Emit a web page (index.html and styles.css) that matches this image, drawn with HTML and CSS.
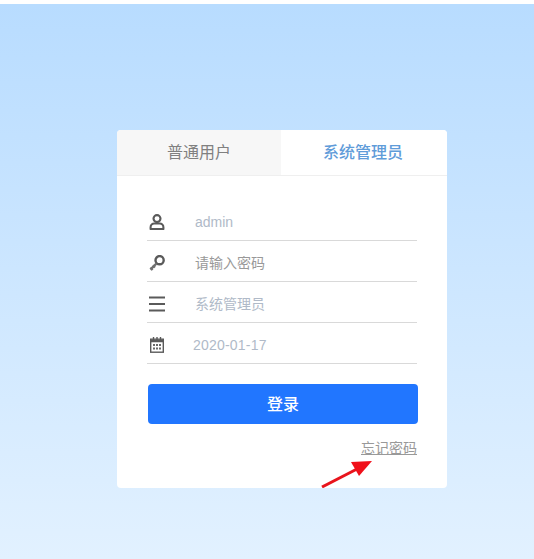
FILE: index.html
```html
<!DOCTYPE html>
<html lang="zh">
<head>
<meta charset="utf-8">
<title>登录</title>
<link rel="stylesheet" href="styles.css">
</head>
<body>
<main class="page">
  <section class="card">
    <div class="tabs">
      <div class="tab">普通用户</div>
      <div class="tab active">系统管理员</div>
    </div>
    <form class="form">
      <div class="row">
        <svg class="icon" viewBox="0 0 16 16"><circle cx="8" cy="4.6" r="3.5" fill="none" stroke="#5a5a5a" stroke-width="2.1"/><path d="M1.6 15v-1.8c0-2.2 1.8-3.7 3.6-3.7h5.6c1.8 0 3.6 1.5 3.6 3.7V15z" fill="none" stroke="#5a5a5a" stroke-width="2.1" stroke-linejoin="round"/></svg>
        <span class="value">admin</span>
      </div>
      <div class="row">
        <svg class="icon" viewBox="0 0 16 16"><circle cx="10.6" cy="5.2" r="4.1" fill="none" stroke="#5a5a5a" stroke-width="2.4"/><path d="M7.6 8.4 1.4 14.6M1.4 12.6l2.2 2.4M3.8 10.2l2.2 2.4" fill="none" stroke="#707070" stroke-width="2.2"/></svg>
        <span class="value dark cjk">请输入密码</span>
      </div>
      <div class="row">
        <svg class="icon" viewBox="0 0 16 16"><path d="M0 1.6h16M0 8h16M0 14.4h16" stroke="#5a5a5a" stroke-width="2"/></svg>
        <span class="value cjk">系统管理员</span>
      </div>
      <div class="row">
        <svg class="icon" viewBox="0 0 16 16"><path d="M4.5 0v3M8 0v3M11.5 0v3" stroke="#5a5a5a" stroke-width="1.4"/><rect x="1.7" y="2.2" width="12.6" height="13" fill="none" stroke="#5a5a5a" stroke-width="1.4"/><path d="M1.7 3h12.6v2.2H1.7z" fill="#5a5a5a"/><path d="M4 7h2v2H4zM7 7h2v2H7zM10 7h2v2h-2zM4 10.6h2v2H4zM7 10.6h2v2H7zM10 10.6h2v2h-2z" fill="#6a6a6a"/></svg>
        <span class="value date">2020-01-17</span>
      </div>
      <button class="submit" type="button">登录</button>
      <div class="links"><a class="forgot" href="#">忘记密码</a></div>
    </form>
    <svg class="arrow" viewBox="0 0 52 28"><path d="M1 27 36 9" stroke="#e8141c" stroke-width="3"/><path d="M51 1 30 2l8 14z" fill="#f0101a"/></svg>
  </section>
</main>
</body>
</html>
```
FILE: styles.css
```css
* { box-sizing: border-box; }
html, body { margin: 0; height: 100%; background: #fff; }
body {
  padding-top: 4px;
  font-family: "Liberation Sans", "Noto Sans CJK SC", sans-serif;
}
.page {
  height: 555px;
  padding: 126px 0 0 117px;
  background: linear-gradient(to bottom, #b8dcff, #e2f1ff);
}
.card {
  position: relative;
  width: 330px;
  height: 358px;
  background: #fff;
  border-radius: 4px;
  overflow: hidden;
}
.tabs {
  display: flex;
  height: 46px;
  border-bottom: 1px solid #efefef;
}
.tab {
  width: 164px;
  display: flex;
  align-items: center;
  justify-content: center;
  padding-bottom: 3px;
  font-size: 16px;
  color: #808080;
  background: #f7f7f7;
}
.tab.active {
  width: 166px;
  padding-right: 2px;
  background: #fff;
  color: #5f9cd9;
  font-weight: 500;
}
.form { padding: 24px 30px 0; }
.row {
  display: flex;
  align-items: center;
  height: 41px;
  border-bottom: 1px solid #d9d9d9;
  padding-left: 2px;
  padding-top: 3px;
}
.icon { width: 16px; height: 16px; flex: none; }
.value {
  margin-left: 30px;
  font-size: 14px;
  color: #b0bac8;
}
.value.cjk { margin-left: 30px; margin-top: -2px; }
.value.dark { color: #999; }
.value.date { margin-left: 28px; letter-spacing: 0.2px; }
.submit {
  display: block;
  width: 270px;
  height: 40px;
  margin: 20px 0 0 1px;
  padding: 0 0 3px;
  border: 0;
  border-radius: 4px;
  background: #2176ff;
  color: #fff;
  font: 500 16px "Liberation Sans", "Noto Sans CJK SC", sans-serif;
}
.links {
  display: flex;
  justify-content: flex-end;
  margin-top: 15px;
}
.forgot {
  font-size: 14px;
  line-height: 18px;
  color: #999;
  text-decoration: underline;
}
.arrow {
  position: absolute;
  left: 204px;
  bottom: 0;
  width: 52px;
  height: 28px;
}
```
